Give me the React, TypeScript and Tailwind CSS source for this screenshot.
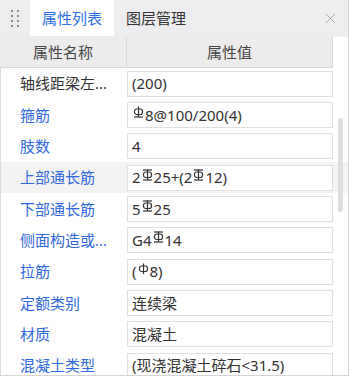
import { X } from 'lucide-react';

type Grade = 'A' | 'B' | 'C';

// 钢筋级别符号
function Bar({ grade }: { grade: Grade }) {
  return (
    <svg width="11" height="12" viewBox="0 0 11 12" className="mx-[1px] -translate-y-[3px] text-[#333]">
      <rect x="1.5" y="3" width="8" height="5.5" rx="2.2" fill="none" stroke="currentColor" strokeWidth="1.2" />
      <line x1="5.5" y1="0.5" x2="5.5" y2="11" stroke="currentColor" strokeWidth="1.2" />
      {grade !== 'A' && <line x1="1" y1="11" x2="10" y2="11" stroke="currentColor" strokeWidth="1.2" />}
      {grade === 'C' && <line x1="1" y1="1" x2="10" y2="1" stroke="currentColor" strokeWidth="1.2" />}
    </svg>
  );
}

type Part = string | { g: Grade };

type Row = {
  name: string;
  value: Part[];
  plain?: boolean;
  active?: boolean;
};

const rows: Row[] = [
  { name: '轴线距梁左...', value: ['(200)'], plain: true },
  { name: '箍筋', value: [{ g: 'B' }, '8@100/200(4)'] },
  { name: '肢数', value: ['4'] },
  { name: '上部通长筋', value: ['2', { g: 'C' }, '25+(2', { g: 'C' }, '12)'], active: true },
  { name: '下部通长筋', value: ['5', { g: 'C' }, '25'] },
  { name: '侧面构造或...', value: ['G4', { g: 'C' }, '14'] },
  { name: '拉筋', value: ['(', { g: 'A' }, '8)'] },
  { name: '定额类别', value: ['连续梁'] },
  { name: '材质', value: ['混凝土'] },
  { name: '混凝土类型', value: ['(现浇混凝土碎石<31.5)'] },
];

export default function App() {
  return (
    <div
      className="relative h-[378px] w-[350px] overflow-hidden bg-white text-[15px] text-[#333]"
      style={{ fontFamily: '"Noto Sans", "Noto Sans CJK SC", sans-serif' }}
    >
      <div className="flex h-[376px] w-[349px] flex-col overflow-hidden border-r border-b border-[#d6d6d6]">
        {/* 标签栏 */}
        <div className="flex h-[37px] shrink-0 items-stretch bg-[#ededef]">
          <div className="grid w-[30px] place-items-center">
            <div className="grid grid-cols-2 gap-x-[4px] gap-y-[3px]">
              {Array.from({ length: 8 }).map((_, i) => (
                <span key={i} className="h-[2px] w-[2px] bg-[#8a8a8a]" />
              ))}
            </div>
          </div>
          <div className="flex h-[36px] w-[84px] items-center justify-center bg-white text-[#2f6fe4]">
            属性列表
          </div>
          <div className="flex w-[84px] items-center justify-center text-[#333]">图层管理</div>
          <div className="ml-auto flex w-[34px] items-center justify-center pr-[2px] text-[#a0a0a0]">
            <X size={17} strokeWidth={1.2} />
          </div>
        </div>

        {/* 表头 */}
        <div className="flex h-[31px] shrink-0 pr-[15px] text-[#444]">
          <div className="flex w-[127px] items-center justify-center border-r border-b border-[#d8d8d8] bg-[#ececec]">
            属性名称
          </div>
          <div className="flex flex-1 items-center justify-center border-r border-b border-[#d8d8d8] bg-[#ececec]">
            属性值
          </div>
        </div>

        {/* 行 */}
        <div className="relative flex-1 border-l border-[#dcdcdc]">
          {rows.map((row) => (
            <div
              key={row.name}
              className={`flex h-[31.33px] items-center ${row.active ? 'bg-[#f3f3f3]' : ''}`}
            >
              <div
                className={`w-[126px] shrink-0 truncate pl-[19px] ${row.plain ? 'text-[#333]' : 'text-[#3068e0]'}`}
              >
                {row.name}
              </div>
              <div className="flex h-[26px] w-[206px] items-center border border-[#e0e0e0] bg-white pl-[4px] whitespace-nowrap">
                {row.value.map((p, i) =>
                  typeof p === 'string' ? <span key={i}>{p}</span> : <Bar key={i} grade={p.g} />
                )}
              </div>
            </div>
          ))}
          <div className="absolute top-[50px] right-[5px] h-[94px] w-[5px] rounded-full bg-[#dedede]" />
        </div>
      </div>
    </div>
  );
}
